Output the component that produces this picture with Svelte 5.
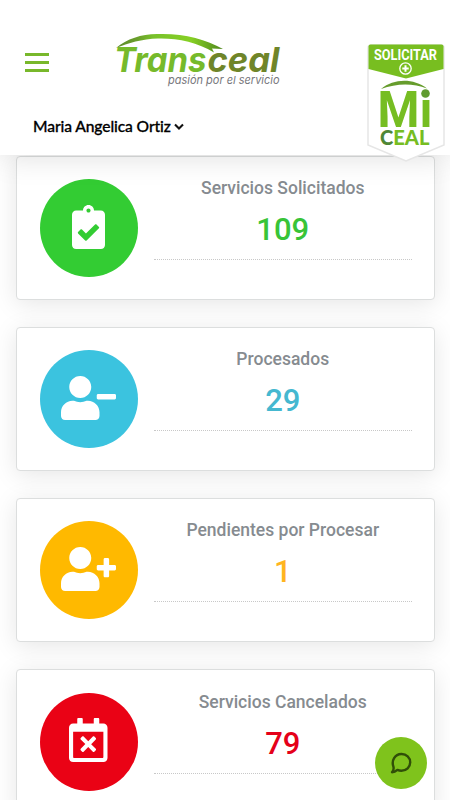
<script lang="ts">
	type Card = {
		title: string;
		value: number;
		kind: string;
		width: number;
		path: string;
	};

	const userPath =
		'M224 256c70.7 0 128-57.3 128-128S294.7 0 224 0 96 57.3 96 128s57.3 128 128 128zm89.6 32h-16.7c-22.2 10.2-46.9 16-72.9 16s-50.6-5.8-72.9-16h-16.7C60.2 288 0 348.2 0 422.4V464c0 26.5 21.5 48 48 48h352c26.5 0 48-21.5 48-48v-41.6c0-74.2-60.2-134.4-134.4-134.4z';

	const cards: Card[] = [
		{
			title: 'Servicios Solicitados',
			value: 109,
			kind: 'requested',
			width: 384,
			path: 'M336 64h-80c0-35.3-28.7-64-64-64s-64 28.7-64 64H48C21.5 64 0 85.5 0 112v352c0 26.5 21.5 48 48 48h288c26.5 0 48-21.5 48-48V112c0-26.5-21.5-48-48-48zM192 40c13.3 0 24 10.7 24 24s-10.7 24-24 24-24-10.7-24-24 10.7-24 24-24zm121.2 231.8l-143 141.8c-4.7 4.7-12.3 4.6-17-.1l-82.6-83.3c-4.7-4.7-4.6-12.3.1-17L99.1 285c4.7-4.7 12.3-4.6 17 .1l46 46.4 106-105.2c4.7-4.7 12.3-4.6 17 .1l28.2 28.4c4.7 4.8 4.6 12.3-.1 17z'
		},
		{
			title: 'Procesados',
			value: 29,
			kind: 'processed',
			width: 640,
			path: 'M624 208H432c-8.8 0-16 7.2-16 16v32c0 8.8 7.2 16 16 16h192c8.8 0 16-7.2 16-16v-32c0-8.8-7.2-16-16-16z' + userPath
		},
		{
			title: 'Pendientes por Procesar',
			value: 1,
			kind: 'pending',
			width: 640,
			path: 'M624 208h-64v-64c0-8.8-7.2-16-16-16h-32c-8.8 0-16 7.2-16 16v64h-64c-8.8 0-16 7.2-16 16v32c0 8.8 7.2 16 16 16h64v64c0 8.8 7.2 16 16 16h32c8.8 0 16-7.2 16-16v-64h64c8.8 0 16-7.2 16-16v-32c0-8.8-7.2-16-16-16z' + userPath
		},
		{
			title: 'Servicios Cancelados',
			value: 79,
			kind: 'cancelled',
			width: 448,
			path: 'M311.7 374.7l-17 17c-4.7 4.7-12.3 4.7-17 0L224 337.9l-53.7 53.7c-4.7 4.7-12.3 4.7-17 0l-17-17c-4.7-4.7-4.7-12.3 0-17l53.7-53.7-53.7-53.7c-4.7-4.7-4.7-12.3 0-17l17-17c4.7-4.7 12.3-4.7 17 0l53.7 53.7 53.7-53.7c4.7-4.7 12.3-4.7 17 0l17 17c4.7 4.7 4.7 12.3 0 17L257.9 304l53.7 53.7c4.8 4.7 4.8 12.3.1 17zM448 112v352c0 26.5-21.5 48-48 48H48c-26.5 0-48-21.5-48-48V112c0-26.5 21.5-48 48-48h48V12c0-6.6 5.4-12 12-12h40c6.6 0 12 5.4 12 12v52h128V12c0-6.6 5.4-12 12-12h40c6.6 0 12 5.4 12 12v52h48c26.5 0 48 21.5 48 48zm-48 346V160H48v298c0 3.3 2.7 6 6 6h340c3.3 0 6-2.7 6-6z'
		}
	];
</script>

<div class="page">
	<header class="header">
		<div class="header-top">
			<button class="menu" aria-label="Menú">
				<span></span>
				<span></span>
				<span></span>
			</button>
			<svg class="logo" viewBox="0 0 170 58" width="170" height="58">
				<defs>
					<linearGradient id="swoosh">
						<stop offset="0" stop-color="#5d8a2c" />
						<stop offset="0.2" stop-color="#6a9f2b" />
						<stop offset="0.35" stop-color="#78c12b" />
						<stop offset="0.7" stop-color="#86d024" />
						<stop offset="1" stop-color="#4f861d" />
					</linearGradient>
				</defs>
				<text class="brand" x="1" y="41.5" textLength="92.5" lengthAdjust="spacingAndGlyphs">Trans</text>
				<text class="brand brand-dark" x="94.5" y="41.5" textLength="72" lengthAdjust="spacingAndGlyphs"
					>ceal</text
				>
				<path
					d="M3 18C14 9 28 4 44 4c26-1 48 5 66 15l-11-.5 2 4C84 12 64 8 45 8.500 29 9 15 13 3 18z"
					fill="url(#swoosh)"
				/>
				<text class="tagline" x="55" y="54" textLength="111.5" lengthAdjust="spacingAndGlyphs"
					>pasión por el servicio</text
				>
			</svg>
		</div>
		<div class="account">
			<span>Maria Angelica Ortiz</span>
			<svg class="chevron" viewBox="0 0 10 8" width="10" height="8">
				<path d="M1 1.5L5 5.5l4-4" fill="none" stroke="#111" stroke-width="2.1" />
			</svg>
		</div>
		<svg class="badge" viewBox="0 0 80 122" width="80" height="122">
			<path
				d="M5 2h70q3 0 3 3v97L40 118 2 102V5q0-3 3-3z"
				fill="#fff"
				stroke="#e6e6e6"
				stroke-width="1.5"
			/>
			<path d="M4.5 1.5h71q2 0 2 2V26L40 35.500 2.500 26V3.500q0-2 2-2z" fill="#78be20" />
			<text class="badge-title" x="8" y="17" textLength="63" lengthAdjust="spacingAndGlyphs"
				>SOLICITAR</text
			>
			<circle cx="39.5" cy="25.5" r="5.7" fill="none" stroke="#fff" stroke-width="1.3" />
			<path d="M39.5 22.3v6.400M36.300 25.500h6.400" stroke="#fff" stroke-width="2" />
			<path d="M15 46C28 35.500 47 35 61 45.500 47 40 31 40 15 46z" fill="#669c2c" />
			<text class="badge-mi" x="11.5" y="84" textLength="55" lengthAdjust="spacingAndGlyphs">Mı</text>
			<circle cx="59.5" cy="50.5" r="4.3" fill="#609b30" />
			<text class="badge-ceal" x="14" y="101.5" textLength="49.5" lengthAdjust="spacingAndGlyphs"
				><tspan class="brand-dark">C</tspan>EAL</text
			>
		</svg>
	</header>

	<main class="cards">
		{#each cards as card}
			<section class="card {card.kind}">
				<div class="circle">
					<svg viewBox="0 0 {card.width} 512" height="44" width={(card.width * 44) / 512}>
						<path d={card.path} fill="#fff" />
					</svg>
				</div>
				<div class="info">
					<h2>{card.title}</h2>
					<p>{card.value}</p>
				</div>
			</section>
		{/each}
	</main>

	<button class="chat" aria-label="Chat">
		<svg viewBox="0 0 24 24" width="24" height="24">
			<path
				d="M4.4 15.600C2.200 9.500 5.800 3.200 12.400 3c5-.1 8.800 3.500 8.800 8.300 0 4.900-3.800 8.500-8.800 8.500-1.500 0-2.800-.3-4-.9-1.600 1.400-3.300 2.300-5.400 2.400 1.500-1.700 2-3.500 1.400-5.700z"
				fill="none"
				stroke="#304f08"
				stroke-width="2.4"
				stroke-linejoin="round"
			/>
		</svg>
	</button>
</div>

<style>
	:global(body) {
		background: #fff;
		overflow: hidden;
	}

	.page {
		position: relative;
		height: 800px;
		overflow: hidden;
		font-family: Roboto, sans-serif;
	}

	.header {
		position: relative;
		z-index: 1;
		height: 155px;
		box-sizing: border-box;
		padding: 30px 25px 0;
		background: #fff;
		box-shadow: 0 0 30px rgba(0, 0, 0, 0.15);
	}

	.header-top {
		display: flex;
		align-items: flex-start;
		height: 84px;
	}

	.menu {
		display: flex;
		flex-direction: column;
		gap: 5px;
		width: 24px;
		margin: 23px 64px 0 0;
		padding: 0;
		border: 0;
		background: none;
	}

	.menu span {
		height: 3px;
		background: #78b82b;
	}

	.brand {
		font: italic 700 34px Inter, sans-serif;
		fill: #76ba2b;
	}

	.brand-dark {
		fill: #6f8529;
	}

	.tagline {
		font: italic 400 11px Inter, sans-serif;
		fill: #77777c;
	}

	.account {
		display: flex;
		align-items: center;
		gap: 3px;
		height: 25px;
		padding-left: 8px;
		font: 500 15.6px/25px Lato, sans-serif;
		letter-spacing: -0.1px;
		color: #000;
		-webkit-text-stroke: 0.3px #000;
	}

	.badge {
		position: absolute;
		top: 43px;
		left: 366px;
	}

	.badge-title {
		font: 700 14px Roboto, sans-serif;
		fill: #fff;
	}

	.badge-mi {
		font: 700 50px Roboto, sans-serif;
		fill: #76bd22;
	}

	.badge-ceal {
		font: 900 20.5px Lato, sans-serif;
		fill: #76bd22;
	}

	.badge-ceal .brand-dark {
		fill: #4f8736;
	}

	.cards {
		display: flex;
		flex-direction: column;
		gap: 27px;
		padding: 1px 15.5px 0 16px;
	}

	.card {
		display: flex;
		box-sizing: border-box;
		height: 144.1px;
		flex-shrink: 0;
		padding: 22.3px 21.500px 0 22.5px;
		border: 1px solid #dcdede;
		border-radius: 4px;
		background: #fff;
		box-shadow: 0 4px 25px rgba(0, 0, 0, 0.1);
	}

	.circle {
		display: flex;
		align-items: center;
		justify-content: center;
		flex-shrink: 0;
		width: 98px;
		height: 98px;
		margin-right: 16px;
		border-radius: 50%;
		background: var(--circle);
	}

	.circle svg {
		margin-bottom: 3px;
	}

	.info {
		flex: 1;
		height: 80px;
		border-bottom: 1px dotted #c8c8c8;
		text-align: center;
	}

	h2 {
		margin: 0;
		font-size: 17.5px;
		font-weight: 500;
		line-height: 18px;
		letter-spacing: 0;
		color: #868b90;
	}

	p {
		margin: 15px 0 0;
		font-size: 31px;
		font-weight: 500;
		line-height: 36px;
		color: var(--text);
	}

	.requested {
		--circle: #33cc33;
		--text: #38c438;
	}

	.processed {
		--circle: #3bc3df;
		--text: #45b8d0;
	}

	.pending {
		--circle: #ffb900;
		--text: #ffb51f;
	}

	.cancelled {
		--circle: #ea0215;
		--text: #e50019;
	}

	.chat {
		position: absolute;
		z-index: 2;
		left: 375px;
		top: 737px;
		display: flex;
		align-items: center;
		justify-content: center;
		width: 52px;
		height: 52px;
		padding: 0;
		border: 0;
		border-radius: 50%;
		background: #7fc31c;
	}
</style>
